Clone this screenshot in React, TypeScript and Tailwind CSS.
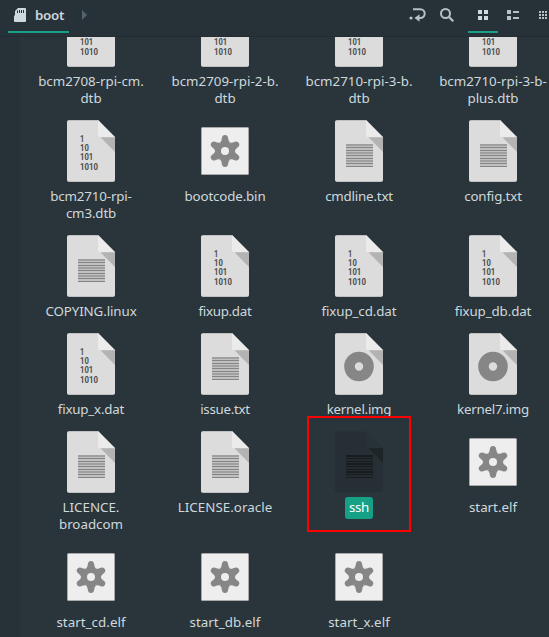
type Kind = 'binary' | 'text' | 'disc' | 'gear' | 'ghost';
type Entry = { kind: Kind; lines: string[]; track?: string; selected?: boolean };

const rows: Entry[][] = [
  [
    { kind: 'binary', lines: ['bcm2708-rpi-cm.', 'dtb'] },
    { kind: 'binary', lines: ['bcm2709-rpi-2-b.', 'dtb'] },
    { kind: 'binary', lines: ['bcm2710-rpi-3-b.', 'dtb'] },
    { kind: 'binary', lines: ['bcm2710-rpi-3-b-', 'plus.dtb'] },
  ],
  [
    { kind: 'binary', lines: ['bcm2710-rpi-', 'cm3.dtb'], track: 'tracking-[-0.15px]' },
    { kind: 'gear', lines: ['bootcode.bin'], track: 'tracking-[-0.15px]' },
    { kind: 'text', lines: ['cmdline.txt'], track: 'tracking-[-0.2px]' },
    { kind: 'text', lines: ['config.txt'], track: 'tracking-[-0.15px]' },
  ],
  [
    { kind: 'text', lines: ['COPYING.linux'], track: 'tracking-[-0.1px]' },
    { kind: 'binary', lines: ['fixup.dat'], track: 'tracking-[-0.3px]' },
    { kind: 'binary', lines: ['fixup_cd.dat'], track: 'tracking-[-0.1px]' },
    { kind: 'binary', lines: ['fixup_db.dat'], track: 'tracking-[-0.1px]' },
  ],
  [
    { kind: 'binary', lines: ['fixup_x.dat'], track: 'tracking-[-0.2px]' },
    { kind: 'text', lines: ['issue.txt'], track: 'tracking-[-0.3px]' },
    { kind: 'disc', lines: ['kernel.img'], track: 'tracking-[-0.25px]' },
    { kind: 'disc', lines: ['kernel7.img'], track: 'tracking-[-0.25px]' },
  ],
  [
    { kind: 'text', lines: ['LICENCE.', 'broadcom'] },
    { kind: 'text', lines: ['LICENSE.oracle'], track: 'tracking-[0.05px]' },
    { kind: 'ghost', lines: ['ssh'], track: 'tracking-[-0.4px]', selected: true },
    { kind: 'gear', lines: ['start.elf'] },
  ],
  [
    { kind: 'gear', lines: ['start_cd.elf'], track: 'tracking-[0.05px]' },
    { kind: 'gear', lines: ['start_db.elf'], track: 'tracking-[0.05px]' },
    { kind: 'gear', lines: ['start_x.elf'], track: 'tracking-[0.05px]' },
  ],
];

function GearIcon() {
  return (
    <svg viewBox="0 0 64 64" className="size-16 shrink-0">
      <rect x="8" y="8" width="48" height="48" rx="1.5" fill="#a9a9a9" />
      <rect x="9" y="9" width="46" height="46" rx="0.5" fill="#eeeeee" />
      <g transform="translate(32 32)" fill="#868686">
        {[0, 60, 120, 180, 240, 300].map((a) => (
          <path
            key={a}
            transform={`rotate(${a})`}
            d="M0 0L-5 -8.5Q-3.4 -9.6 -3.1 -13Q-2.8 -16 0 -16Q2.8 -16 3.1 -13Q3.4 -9.6 5 -8.5Z"
          />
        ))}
        <circle r="8.5" />
        <circle r="4" fill="#eeeeee" />
      </g>
    </svg>
  );
}

function FileIcon({ kind }: { kind: Kind }) {
  if (kind === 'gear') return <GearIcon />;
  const ghost = kind === 'ghost';
  return (
    <svg viewBox="0 0 64 64" className="size-16 shrink-0">
      {!ghost && (
        <path d="M10 1H39L56 18V61Q56 63 54 63H10Q8 63 8 61V3Q8 1 10 1Z" fill="#a3a5a7" />
      )}
      <path
        d="M10 1.5H39L56 18.5V60.5Q56 62.5 54 62.5H10Q8 62.5 8 60.5V3.5Q8 1.5 10 1.5Z"
        fill={ghost ? '#262f35' : '#dcdcdc'}
      />
      <path d="M39 1L56 18.3H41Q39 18.3 39 16.3Z" fill={ghost ? '#283137' : '#ebebeb'} />
      <path d="M41.5 18.3H56V33Z" fill={ghost ? '#1e2529' : '#b3b3b3'} />
      {kind === 'binary' && (
        <g fill="#4c4c4c" fontFamily="Roboto, sans-serif" fontWeight="700" fontSize="9.4" letterSpacing="0">
          <text x="21" y="22.8" textLength="4.2" lengthAdjust="spacingAndGlyphs">1</text>
          <text x="21" y="32" textLength="8.8" lengthAdjust="spacingAndGlyphs">10</text>
          <text x="21" y="41.3" textLength="13.2" lengthAdjust="spacingAndGlyphs">101</text>
          <text x="21" y="50.8" textLength="18" lengthAdjust="spacingAndGlyphs">1010</text>
        </g>
      )}
      {(kind === 'text' || ghost) && (
        <g>
          <rect x="19" y="25" width="27" height="23" fill={ghost ? '#242c31' : '#c0c0c0'} />
          <g fill={ghost ? '#171c1f' : '#a0a0a0'}>
            <path d="M19 25h27v2h-27zM19 33h27v2h-27zM19 41h27v2h-27z" />
          </g>
          <g fill={ghost ? '#171c1f' : '#858585'}>
            <path d="M19 28h27v1h-27zM19 31h27v1h-27zM19 36h27v1h-27zM19 39h27v1h-27zM19 44h27v1h-27zM19 47h27v1h-27z" />
          </g>
        </g>
      )}
      {kind === 'disc' && (
        <g>
          <circle cx="32" cy="34.5" r="14.8" fill="#868686" />
          <circle cx="32" cy="34.5" r="4.2" fill="#dcdcdc" />
        </g>
      )}
    </svg>
  );
}

function Item({ entry }: { entry: Entry }) {
  return (
    <div className="flex w-[134px] shrink-0 flex-col items-center pb-3">
      <FileIcon kind={entry.kind} />
      <div
        className={`text-center ${entry.track ?? ''} ${
          entry.selected
            ? 'mt-[3px] -mb-[3px] rounded-[3px] bg-[#16a085] px-1 pt-0.5 pb-[3px] text-white'
            : 'mt-[5px]'
        }`}
      >
        {entry.lines.map((l) => (
          <div key={l} className="h-[17px] leading-[17px] whitespace-nowrap">
            {l}
          </div>
        ))}
      </div>
    </div>
  );
}

function Header() {
  return (
    <header className="flex h-[37px] shrink-0 items-start overflow-hidden border-b border-[#222c31] bg-[#273238] pl-2">
      <div className="flex h-[33px] w-[61px] items-center border-b-2 border-[#16a085] pb-px pl-1.5">
        <svg viewBox="0 0 12 14" className="h-3.5 w-3 shrink-0">
          <path d="M4 0H11Q12 0 12 1V13Q12 14 11 14H1Q0 14 0 13V8L1 7V3Z" fill="#cfd8dc" />
          <path d="M3.5 2.5V5M5.5 2V5M7.5 2V5M9.5 2V5" stroke="#273238" />
        </svg>
        <span className="ml-[9px] text-[13.33px] leading-[18px] font-semibold tracking-[-0.3px] text-[#cfd8dc]">boot</span>
      </div>
      <svg viewBox="0 0 5 10" className="mt-2.5 ml-[13px] h-2.5 w-[5px]">
        <path d="M0 0L5 5L0 10Z" fill="#56626a" />
      </svg>
      <div className="ml-auto flex h-[33px] w-[141px] shrink-0">
        <svg viewBox="0 0 17 14" className="mt-2 mr-3.5 ml-px h-3.5 w-[17px] shrink-0">
          <circle cx="2" cy="10" r="1.6" fill="#b7c1c6" />
          <path d="M4 1.2H11.3A4.4 4.4 0 0 1 11.3 10H7" fill="none" stroke="#b7c1c6" strokeWidth="2" />
          <path d="M10.5 6.2V13.8L5.5 10Z" fill="#b7c1c6" />
        </svg>
        <svg viewBox="0 0 14 14" className="mt-2 h-3.5 w-3.5 shrink-0">
          <circle cx="5.5" cy="5.5" r="4.5" fill="none" stroke="#b7c1c6" strokeWidth="2" />
          <path d="M9 9L13.3 13.3" stroke="#b7c1c6" strokeWidth="2.2" />
        </svg>
        <div className="ml-3.5 flex h-[33px] w-[30px] shrink-0 justify-center border-b-2 border-[#16a085] pt-2.5">
          <svg viewBox="0 0 10 10" className="size-2.5" fill="#cfd8dc">
            <path d="M0 0h4v4h-4zM6 0h4v4h-4zM0 6h4v4h-4zM6 6h4v4h-4z" />
          </svg>
        </div>
        <svg viewBox="0 0 12 10" className="mt-2.5 ml-[9px] h-2.5 w-3 shrink-0" fill="#b7c1c6">
          <path d="M0 0h4v4h-4zM6 1h6v2h-6zM0 6h4v4h-4zM6 7h6v2h-6z" />
        </svg>
        <svg viewBox="0 0 8 8" className="mt-[11px] ml-5 size-2 shrink-0" fill="#b7c1c6">
          {[0, 3, 6].map((y) => [0, 3, 6].map((x) => <rect key={`${x}-${y}`} x={x} y={y} width="2" height="2" />))}
        </svg>
      </div>
    </header>
  );
}

export default function App() {
  return (
    <div className="relative flex h-[637px] w-[549px] flex-col overflow-hidden bg-[#29353b] font-['Noto_Sans',sans-serif] text-[13.33px] text-[#cfd8dc]">
      <Header />
      <div className="flex min-h-0 flex-1">
        <aside className="w-5 shrink-0 bg-[#273238]" />
        <main className="min-w-0 flex-1 overflow-hidden pl-1">
          <div className="-mt-[33px] flex flex-col">
            {rows.map((row, i) => (
              <div key={i} className="flex">
                {row.map((e) => (
                  <Item key={e.lines.join('')} entry={e} />
                ))}
              </div>
            ))}
          </div>
        </main>
      </div>
      <div className="absolute top-[416px] left-[307px] h-[116px] w-[104px] border-2 border-[#ff0000]" />
    </div>
  );
}
